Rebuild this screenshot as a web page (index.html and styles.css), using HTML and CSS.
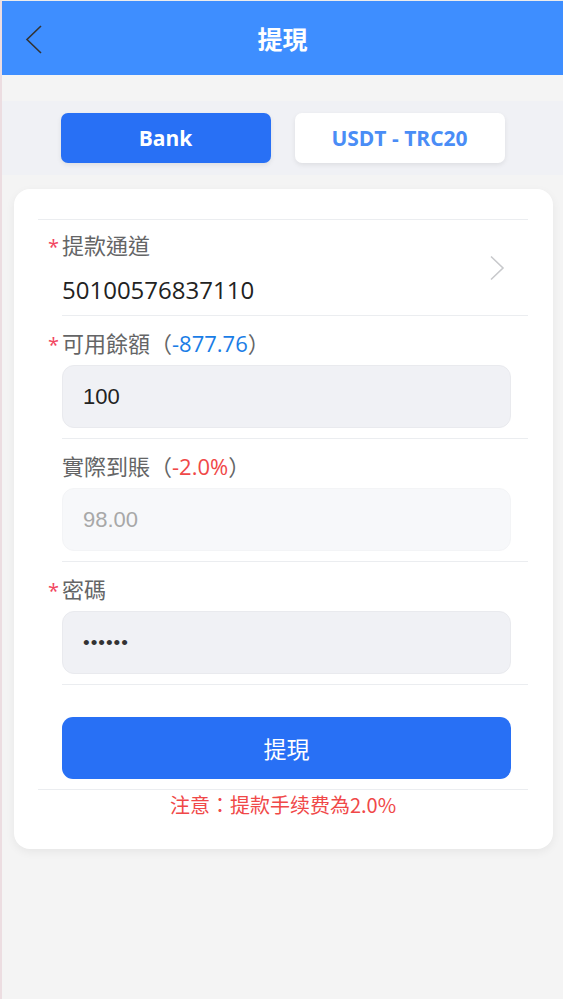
FILE: index.html
```html
<!DOCTYPE html>
<html lang="zh-Hant">
<head>
    <meta charset="UTF-8">
    <meta name="viewport" content="width=device-width, initial-scale=1.0">
    <title>提現</title>
    <link rel="stylesheet" href="styles.css">
</head>
<body>
    <div class="page">
        <div class="nav-bar">
            <span class="nav-back">
                <svg width="20" height="32" viewBox="0 0 20 32"><polyline points="17,2 3,15.5 17,29" fill="none" stroke="#333" stroke-width="1.6"/></svg>
            </span>
            <h1 class="nav-title">提現</h1>
        </div>

        <div class="tabs">
            <button class="tab tab-active">Bank</button>
            <button class="tab">USDT - TRC20</button>
        </div>

        <div class="card">
            <div class="group">
                <div class="cell">
                    <div class="cell-inner picker">
                        <div class="label"><span class="required">*</span>提款通道</div>
                        <div class="value">50100576837110</div>
                        <span class="arrow">
                            <svg width="16" height="26" viewBox="0 0 16 26"><polyline points="2,1.5 14,13 2,24.5" fill="none" stroke="#c8c9cc" stroke-width="1.6"/></svg>
                        </span>
                    </div>
                </div>
                <div class="cell">
                    <div class="cell-inner">
                        <div class="label"><span class="required">*</span>可用餘額（<span class="blue">-877.76</span>）</div>
                        <input class="field" type="text" value="100">
                    </div>
                </div>
                <div class="cell">
                    <div class="cell-inner">
                        <div class="label">實際到賬（<span class="red">-2.0%</span>）</div>
                        <input class="field field-readonly" type="text" value="98.00" readonly>
                    </div>
                </div>
                <div class="cell">
                    <div class="cell-inner">
                        <div class="label"><span class="required">*</span>密碼</div>
                        <input class="field" type="password" value="123456">
                    </div>
                </div>
                <div class="cell cell-submit">
                    <button class="submit-btn">提現</button>
                </div>
            </div>
            <p class="notice">注意：提款手续费為2.0%</p>
        </div>
    </div>
</body>
</html>
```

FILE: styles.css
```css
* {
    box-sizing: border-box;
}

body {
    margin: 0;
    padding: 0;
    background-color: #f4f4f4;
    font-family: "Open Sans", "Noto Sans CJK TC", sans-serif;
}

.page {
    min-height: 999px;
    border-left: 2px solid #ecdde1;
    border-top: 1px solid #ececec;
    background-color: #f4f4f4;
}

.nav-bar {
    height: 74px;
    background-color: #3e8eff;
    display: flex;
    align-items: center;
    justify-content: center;
    position: relative;
}

.nav-back {
    position: absolute;
    left: 22px;
    top: 23px;
    display: flex;
}

.nav-title {
    margin: 0;
    color: #fff;
    font-size: 25px;
    font-weight: bold;
    font-family: "Noto Sans CJK TC", sans-serif;
}

.tabs {
    margin-top: 26px;
    background-color: #f0f1f5;
    padding: 12px 0;
    display: flex;
    justify-content: center;
    gap: 24px;
}

.tab {
    width: 210px;
    height: 50px;
    border: none;
    border-radius: 7px;
    background-color: #fff;
    color: #4a8df6;
    font-family: "Open Sans", sans-serif;
    font-size: 21px;
    font-weight: bold;
    box-shadow: 0 2px 5px rgba(0, 0, 0, 0.08);
    padding: 0;
}

.tab-active {
    background-color: #2870f5;
    color: #fff;
}

.card {
    margin: 14px 10px 0 12px;
    background-color: #fff;
    border-radius: 16px;
    padding: 30px 25px 29px 24px;
    box-shadow: 0 3px 10px rgba(0, 0, 0, 0.06);
}

.group {
    border-top: 1px solid #ebedf0;
    border-bottom: 1px solid #ebedf0;
}

.cell {
    padding-left: 24px;
}

.cell-inner {
    padding: 12px 17px 10px 0;
    border-bottom: 1px solid #ebedf0;
    display: flex;
    flex-direction: column;
}

.picker {
    padding-top: 10px;
    position: relative;
}

.label {
    position: relative;
    height: 30px;
    line-height: 30px;
    font-size: 22px;
    color: #646566;
}

.required {
    position: absolute;
    left: -14px;
    top: 2px;
    color: #f2455e;
    font-size: 20px;
}

.blue {
    color: #1a7de6;
}

.red {
    color: #f04848;
}

.value {
    margin-top: 15px;
    height: 30px;
    line-height: 30px;
    font-size: 24px;
    color: #222;
}

.arrow {
    position: absolute;
    right: 23px;
    top: 35px;
    display: flex;
}

.field {
    margin-top: 7px;
    height: 63px;
    width: 100%;
    border: 1px solid #e9eaee;
    border-radius: 12px;
    background-color: #f0f1f5;
    padding: 0 20px;
    font-family: "Liberation Sans", sans-serif;
    font-size: 22px;
    color: #222;
    outline: none;
}

.field[type="password"] {
    font-size: 19px;
    letter-spacing: 1px;
    color: #333;
}

.field-readonly {
    background-color: #f7f8fa;
    border-color: #f3f4f6;
    color: #a8a8a8;
}

.cell-submit {
    padding: 32px 17px 10px 24px;
}

.submit-btn {
    width: 100%;
    height: 62px;
    border: none;
    border-radius: 11px;
    background-color: #2870f5;
    color: #fff;
    font-family: "Noto Sans CJK TC", sans-serif;
    font-size: 23px;
    padding: 0;
}

.notice {
    margin: 0;
    height: 30px;
    line-height: 30px;
    text-align: center;
    font-size: 20px;
    color: #f04848;
    font-family: "Noto Sans CJK TC", sans-serif;
}
```
